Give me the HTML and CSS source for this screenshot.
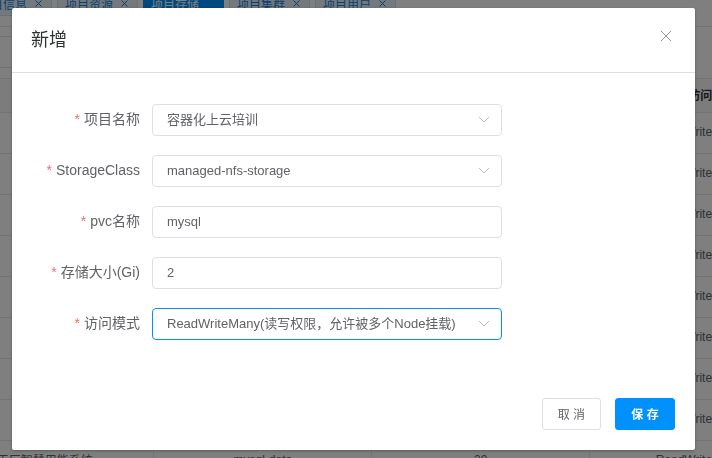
FILE: index.html
```html
<!DOCTYPE html>
<html lang="zh-CN">
<head>
<meta charset="utf-8">
<title>新增</title>
<link rel="stylesheet" href="styles.css">
</head>
<body>
<div class="page" aria-hidden="true">
  <nav class="tabs">
    <a class="tab" href="#">项目信息<svg class="tab-x" viewBox="0 0 7 7"><path d="M.5.5l6 6M6.5.5l-6 6"/></svg></a>
    <a class="tab" href="#">项目资源<svg class="tab-x" viewBox="0 0 7 7"><path d="M.5.5l6 6M6.5.5l-6 6"/></svg></a>
    <a class="tab active" href="#">项目存储</a>
    <a class="tab" href="#">项目集群<svg class="tab-x" viewBox="0 0 7 7"><path d="M.5.5l6 6M6.5.5l-6 6"/></svg></a>
    <a class="tab" href="#">项目用户<svg class="tab-x" viewBox="0 0 7 7"><path d="M.5.5l6 6M6.5.5l-6 6"/></svg></a>
  </nav>
  <div class="toolbar"><div class="search"></div></div>
  <table class="list">
    <thead><tr><th></th><th></th><th></th><th class="mode">访问模式</th></tr></thead>
    <tbody>
      <tr><td></td><td></td><td></td><td>ReadWriteMany</td></tr>
      <tr><td></td><td></td><td></td><td>ReadWriteMany</td></tr>
      <tr><td></td><td></td><td></td><td>ReadWriteMany</td></tr>
      <tr><td></td><td></td><td></td><td>ReadWriteMany</td></tr>
      <tr><td></td><td></td><td></td><td>ReadWriteMany</td></tr>
      <tr><td></td><td></td><td></td><td>ReadWriteMany</td></tr>
      <tr><td></td><td></td><td></td><td>ReadWriteMany</td></tr>
      <tr><td></td><td></td><td></td><td>ReadWriteMany</td></tr>
      <tr><td>工厂智慧用能系统</td><td>mysql-data</td><td>20</td><td>ReadWriteMany</td></tr>
    </tbody>
  </table>
</div>
<div class="mask">
  <form class="dialog" role="dialog" aria-labelledby="title">
    <header class="dialog-head">
      <h1 id="title">新增</h1>
      <button type="button" class="close" aria-label="关闭"><svg viewBox="0 0 12 12"><path d="M1 1l10 10M11 1L1 11"/></svg></button>
    </header>
    <div class="fields">
      <div class="field">
        <label for="project">项目名称</label>
        <div class="control"><select id="project"><option>容器化上云培训</option></select><svg class="arrow" viewBox="0 0 12 8"><path d="M1 1l5 5 5-5"/></svg></div>
      </div>
      <div class="field">
        <label for="storage">StorageClass</label>
        <div class="control"><select id="storage"><option>managed-nfs-storage</option></select><svg class="arrow" viewBox="0 0 12 8"><path d="M1 1l5 5 5-5"/></svg></div>
      </div>
      <div class="field">
        <label for="pvc">pvc名称</label>
        <div class="control"><input id="pvc" type="text" value="mysql"></div>
      </div>
      <div class="field">
        <label for="size">存储大小(Gi)</label>
        <div class="control"><input id="size" type="text" value="2"></div>
      </div>
      <div class="field">
        <label for="mode">访问模式</label>
        <div class="control"><select id="mode" class="current"><option>ReadWriteMany(读写权限，允许被多个Node挂载)</option></select><svg class="arrow" viewBox="0 0 12 8"><path d="M1 1l5 5 5-5"/></svg></div>
      </div>
    </div>
    <footer class="actions">
      <button type="button" class="btn">取 消</button>
      <button type="submit" class="btn primary">保 存</button>
    </footer>
  </form>
</div>
</body>
</html>
```

FILE: styles.css
```css
* {
  box-sizing: border-box;
}

body {
  margin: 0;
  height: 100vh;
  overflow: hidden;
  background: #fff;
  color: #606266;
  font-family: "Liberation Sans", "Noto Sans CJK SC", sans-serif;
}

button,
input,
select {
  font-family: inherit;
}

svg {
  fill: none;
  stroke: currentColor;
}

/* Scrolled list page behind the dialog */
.page {
  height: 100vh;
  overflow: hidden;
  font-size: 12px;
}

.tabs {
  display: flex;
  gap: 5px;
  height: 27px;
  margin-left: -29px;
  border-bottom: 1px solid #e4e7ed;
}

.tab {
  display: flex;
  align-items: center;
  justify-content: space-between;
  flex: none;
  width: 81px;
  height: 26px;
  margin-top: -10px;
  padding: 0 9px 0 7px;
  background: #e6f2fb;
  border: 1px solid #cce4f7;
  color: #1080e0;
  text-decoration: none;
}

.tab.active {
  background: #0091ff;
  border-color: #0091ff;
  color: #fff;
}

.tab-x {
  width: 7px;
  height: 7px;
}

.toolbar {
  height: 52px;
  padding-top: 9px;
  border-bottom: 1px solid #e4e7ed;
}

.search {
  width: 180px;
  height: 32px;
  margin-left: -65px;
  border: 1px solid #dcdfe6;
}

.list {
  width: 872px;
  margin-left: -64px;
  table-layout: fixed;
  border-collapse: collapse;
}

.list th,
.list td {
  height: 41px;
  padding: 0 0 2px;
  border-right: 1px solid #e8eaf0;
  border-bottom: 1px solid #e4e7ed;
  text-align: center;
}

.list th {
  height: 33px;
  background: #f8f8f9;
  color: #303133;
}

.list .mode {
  padding-left: 98px;
  text-align: left;
}

.mask {
  position: fixed;
  inset: 0;
  padding: 8px 17px 8px 12px;
  background: rgba(0, 0, 0, 0.5);
}

.dialog {
  background: #fff;
  border-radius: 2px;
  box-shadow: 0 1px 3px rgba(0, 0, 0, 0.3);
}

.dialog-head {
  display: flex;
  align-items: center;
  justify-content: space-between;
  height: 65px;
  padding: 0 21px 0 19px;
  border-bottom: 1px solid #dcdfe6;
}

.dialog-head h1 {
  margin: 0 0 4px;
  color: #303133;
  font-size: 18px;
  font-weight: 400;
}

.close {
  width: 16px;
  height: 16px;
  margin-bottom: 8px;
  padding: 2px;
  border: 0;
  background: none;
  color: #909399;
}

.close svg {
  display: block;
  width: 12px;
  height: 12px;
}

.fields {
  display: grid;
  gap: 19px;
  padding: 31px 20px 0;
}

.field {
  display: grid;
  grid-template-columns: 108px minmax(0, 350px);
  gap: 12px;
}

.field label {
  font-size: 14px;
  line-height: 30px;
  text-align: right;
  white-space: nowrap;
}

.field label::before {
  content: "*";
  margin-right: 4px;
  color: #f56c6c;
}

.control {
  position: relative;
  height: 32px;
}

.control input,
.control select {
  display: block;
  width: 100%;
  height: 32px;
  padding: 0 14px 2px;
  appearance: none;
  background: #fff;
  border: 1px solid #dcdfe6;
  border-radius: 4px;
  color: #606266;
  font-size: 13px;
  outline: 0;
}

.control .current {
  border-color: #0091ff;
}

.arrow {
  position: absolute;
  top: 12px;
  right: 12px;
  width: 12px;
  height: 8px;
  color: #b4bccc;
  pointer-events: none;
}

.actions {
  display: flex;
  justify-content: flex-end;
  gap: 14px;
  padding: 58px 20px 20px;
}

.btn {
  min-width: 59px;
  height: 32px;
  padding: 0 15px 2px;
  background: #fff;
  border: 1px solid #dcdfe6;
  border-radius: 3px;
  color: #606266;
  font-size: 12px;
}

.btn.primary {
  min-width: 60px;
  background: #0091ff;
  border-color: #0091ff;
  color: #fff;
  font-weight: 700;
}
```
